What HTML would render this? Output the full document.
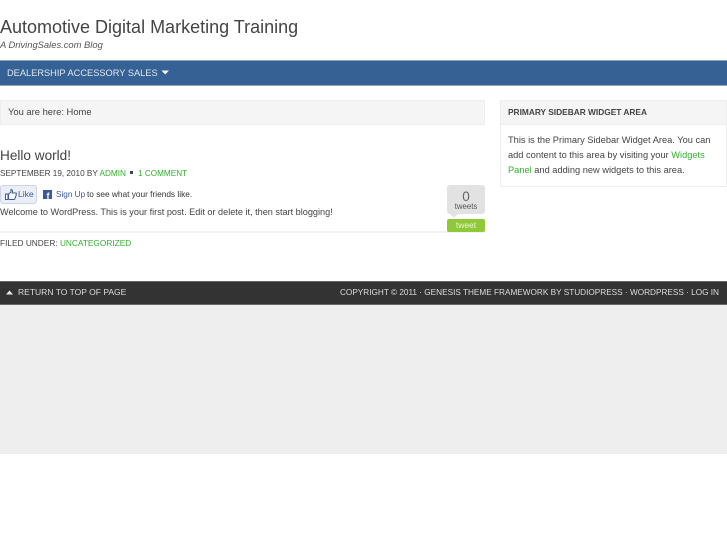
<!DOCTYPE html>
<html><head><meta charset="utf-8"><style>
html,body{margin:0;padding:0;background:#fff}
#p{position:relative;width:727px;height:545px;overflow:hidden;font-family:"Liberation Sans",sans-serif;color:#444;background:#fff;filter:blur(0.3px)}
#p div{position:absolute;box-sizing:border-box}
.t{white-space:nowrap;line-height:14px;height:14px}
.g{color:#33b02f}
</style></head><body><div id="p">
<div class="t" style="left:0;top:15px;font-size:18px;line-height:24px;height:24px;color:#444">Automotive Digital Marketing Training</div>
<div class="t" style="left:0;top:38px;font-size:9.400px;font-style:italic;color:#555">A DrivingSales.com Blog</div>
<div style="left:0;top:60px;width:727px;height:26px;background:#366195;border-top:1px solid #8ea5bf;border-bottom:1px solid #8ea5bf"></div>
<div class="t" style="left:7px;top:65.500px;font-size:9.250px;color:#dfe6ef">DEALERSHIP ACCESSORY SALES</div>
<svg style="position:absolute;left:161px;top:70px" width="9" height="5"><path d="M0.5 0.5H8L4.2 4.5Z" fill="#f2f5f8"/></svg>
<div style="left:0;top:100px;width:485px;height:25px;background:#f5f5f5;border:1px solid #eee"></div>
<div class="t" style="left:8px;top:105px;font-size:9.400px;color:#444">You are here: Home</div>
<div class="t" style="left:0;top:148px;font-size:13.600px;line-height:16px;height:16px;color:#444">Hello world!</div>
<div class="t" style="left:0;top:167px;font-size:8.200px;color:#444">SEPTEMBER 19, 2010 BY <span class="g">ADMIN</span></div>
<div style="left:130px;top:171px;width:3px;height:3px;background:#444"></div>
<div class="t g" style="left:138px;top:167px;font-size:8.200px">1 COMMENT</div>
<div style="left:0;top:185px;width:37px;height:19px;background:#eceef5;border:1px solid #cad4e7;border-radius:3px"></div>
<svg style="position:absolute;left:5px;top:189px" width="12" height="11"><path d="M0.5 5H3V10.5H0.5ZM3.5 5.2L6 3V0.5C7.5 0.5 7.8 2 7.3 4H11C11.500 4 11.500 5 11 5.500C11.500 6.500 11 7 10.600 7.300C10.800 8.300 10.300 8.700 10 8.900C10 10 9.500 10.500 8.800 10.500H5C4.300 10.500 3.800 10 3.500 9.800Z" fill="#fff" stroke="#3b5998" stroke-width="1"/></svg>
<div class="t" style="left:18px;top:187px;font-size:8.500px;color:#3b5998">Like</div>
<div style="left:43px;top:190px;width:9px;height:9px;background:#3b5998"></div>
<div class="t" style="left:46.500px;top:192px;font-size:9px;line-height:8px;height:8px;font-weight:bold;color:#fff">f</div>
<div class="t" style="left:56px;top:187.500px;font-size:8.200px;color:#3b5998">Sign Up</div>
<div class="t" style="left:87px;top:187px;font-size:8.300px;color:#333">to see what your friends like.</div>
<div class="t" style="left:0;top:204.500px;font-size:9.140px;color:#444">Welcome to WordPress. This is your first post. Edit or delete it, then start blogging!</div>
<div style="left:0;top:231px;width:485px;height:2px;background:#f2f2f2"></div>
<div class="t" style="left:0;top:236px;font-size:8.300px;color:#444">FILED UNDER: <span class="g">UNCATEGORIZED</span></div>
<div style="left:447px;top:185px;width:38px;height:29px;background:#e2e2e2;border-radius:3px"></div>
<svg style="position:absolute;left:449px;top:214px" width="10" height="4"><path d="M1 0H9L5 3.500Z" fill="#e2e2e2"/></svg>
<div class="t" style="left:447px;top:190px;width:38px;text-align:center;font-size:13.500px;color:#666">0</div>
<div class="t" style="left:447px;top:200px;width:38px;text-align:center;font-size:7.800px;color:#555">tweets</div>
<div style="left:447px;top:219px;width:38px;height:13px;background:#8fc93a;border-radius:2px"></div>
<div class="t" style="left:447px;top:218px;width:38px;text-align:center;font-size:8.500px;color:#eaf6d5">tweet</div>
<div style="left:500px;top:100px;width:227px;height:87px;background:#fff;border:1px solid #eee"></div>
<div style="left:500px;top:100px;width:227px;height:25px;background:#f5f5f5;border:1px solid #eee"></div>
<div class="t" style="left:508px;top:105px;font-size:8.340px;font-weight:bold;color:#444">PRIMARY SIDEBAR WIDGET AREA</div>
<div class="t" style="left:508px;top:132.500px;font-size:9.270px;color:#444">This is the Primary Sidebar Widget Area. You can</div>
<div class="t" style="left:508px;top:147.500px;font-size:9.270px;color:#444">add content to this area by visiting your <span class="g">Widgets</span></div>
<div class="t" style="left:508px;top:162.500px;font-size:9.270px;color:#444"><span class="g">Panel</span> and adding new widgets to this area.</div>
<div style="left:0;top:281px;width:727px;height:24px;background:#333;border-top:1px solid #666;border-bottom:1px solid #666"></div>
<svg style="position:absolute;left:6px;top:290px" width="8" height="5"><path d="M0 4.500H7L3.500 0.500Z" fill="#e8e8e8"/></svg>
<div class="t" style="left:18px;top:285px;font-size:8.530px;color:#ddd">RETURN TO TOP OF PAGE</div>
<div class="t" style="right:8px;top:286px;font-size:8.220px;color:#ddd">COPYRIGHT © 2011 · GENESIS THEME FRAMEWORK BY STUDIOPRESS · WORDPRESS · LOG IN</div>
<div style="left:0;top:305px;width:727px;height:149px;background:#eee"></div>
</div></body></html>
